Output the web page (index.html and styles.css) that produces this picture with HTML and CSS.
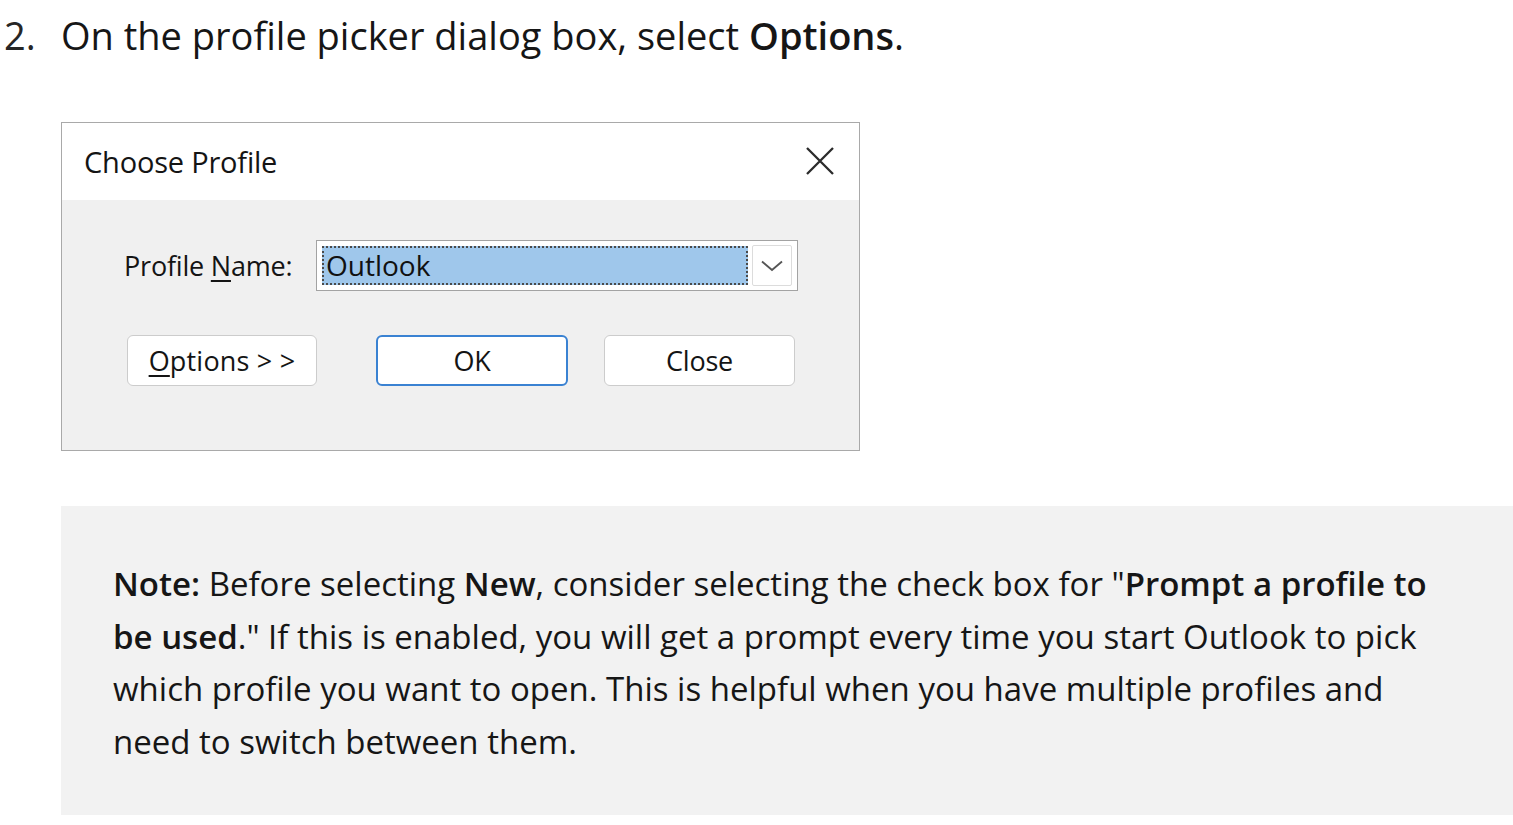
FILE: index.html
```html
<!DOCTYPE html>
<html lang="en">
<head>
<meta charset="utf-8">
<title>Choose Profile</title>
<link rel="stylesheet" href="styles.css">
</head>
<body>
<div class="step">
  <div class="step-num">2.</div>
  <div class="step-body">
    <p class="step-text">On the profile picker dialog box, select <b>Options</b>.</p>

    <div class="dialog">
      <div class="dialog-title">
        <span class="title-text">Choose Profile</span>
        <svg class="close-x" width="30" height="30" viewBox="0 0 30 30" aria-hidden="true">
          <path d="M2 2 L28 28 M28 2 L2 28" stroke="#2b2b2b" stroke-width="2.3" fill="none"/>
        </svg>
      </div>
      <div class="dialog-body">
        <div class="field-row">
          <span class="field-label">Profile <u>N</u>ame:</span>
          <div class="combo">
            <div class="combo-value">Outlook</div>
            <div class="combo-btn">
              <svg width="24" height="12" viewBox="0 0 24 12" aria-hidden="true">
                <path d="M2 1.5 L12 10 L22 1.5" stroke="#555" stroke-width="1.8" fill="none"/>
              </svg>
            </div>
          </div>
        </div>
        <div class="button-row">
          <div class="btn btn-options"><span><u>O</u>ptions &gt; &gt;</span></div>
          <div class="btn btn-ok">OK</div>
          <div class="btn btn-close">Close</div>
        </div>
      </div>
    </div>

    <div class="note">
      <p><b>Note:</b> Before selecting <b>New</b>, consider selecting the check box for "<b>Prompt a profile to be used</b>." If this is enabled, you will get a prompt every time you start Outlook to pick which profile you want to open. This is helpful when you have multiple profiles and need to switch between them.</p>
    </div>
  </div>
</div>
</body>
</html>
```

FILE: styles.css
```css
html, body {
  margin: 0;
  padding: 0;
  background: #ffffff;
}

body {
  font-family: "Open Sans", "Noto Sans", sans-serif;
  color: #161616;
  overflow: hidden;
}

.step {
  display: flex;
  align-items: flex-start;
}

.step-num {
  width: 61px;
  padding-left: 4px;
  box-sizing: border-box;
  font-size: 38px;
  line-height: 70px;
  color: #262626;
}

.step-body {
  flex: 1;
  min-width: 0;
}

.step-text {
  margin: 0;
  font-size: 38px;
  line-height: 70px;
}

.step-text b {
  font-weight: 600;
}

/* Dialog */
.dialog {
  margin-top: 52px;
  width: 799px;
  height: 329px;
  box-sizing: border-box;
  border: 1px solid #a9a9a9;
  background: #f0f0f0;
  display: flex;
  flex-direction: column;
  font-family: "Open Sans", "Noto Sans", sans-serif;
  color: #141414;
}

.dialog-title {
  height: 77px;
  background: #ffffff;
  display: flex;
  align-items: center;
  justify-content: space-between;
  padding: 0 24px 0 22px;
}

.title-text {
  font-size: 29px;
  letter-spacing: -0.2px;
}

.close-x {
  display: block;
  margin-top: -2px;
}

.dialog-body {
  flex: 1;
  display: flex;
  flex-direction: column;
  padding-top: 40px;
}

.field-row {
  display: flex;
  align-items: center;
  padding-left: 62px;
}

.field-label {
  font-size: 27px;
  width: 192px;
  letter-spacing: -0.2px;
}

.field-label u,
.btn u {
  text-decoration-thickness: 2px;
  text-underline-offset: 4px;
}

.combo {
  width: 482px;
  height: 51px;
  box-sizing: border-box;
  border: 1px solid #a3a3a3;
  background: #ffffff;
  padding: 5px;
  display: flex;
  gap: 4px;
}

.combo-value {
  flex: 1;
  background: #9fc7eb;
  border: 2px dotted #4a4a4a;
  box-sizing: border-box;
  font-size: 28px;
  line-height: 34px;
  padding-left: 2px;
  color: #111;
}

.combo-btn {
  width: 40px;
  box-sizing: border-box;
  border: 1px solid #dcdcdc;
  border-radius: 2px;
  background: #ffffff;
  display: flex;
  align-items: center;
  justify-content: center;
  margin-top: -1px;
  margin-bottom: -1px;
}

.button-row {
  display: flex;
  padding-left: 65px;
  margin-top: 44px;
}

.btn {
  height: 51px;
  box-sizing: border-box;
  border: 1px solid #cccccc;
  border-radius: 6px;
  background: #ffffff;
  display: flex;
  align-items: center;
  justify-content: center;
  font-size: 27px;
  letter-spacing: -0.2px;
}

.btn-options {
  width: 190px;
}

.btn-options span {
  letter-spacing: 0.2px;
}

.btn-ok {
  width: 192px;
  margin-left: 59px;
  border: 2px solid #3a82d2;
}

.btn-close {
  width: 191px;
  margin-left: 36px;
}

/* Note */
.note {
  margin-top: 55px;
  background: #f2f2f2;
  padding: 52px 52px 47px 52px;
}

.note p {
  margin: 0;
  font-size: 33px;
  line-height: 52.5px;
  color: #161616;
}

.note b {
  font-weight: 600;
}
```
